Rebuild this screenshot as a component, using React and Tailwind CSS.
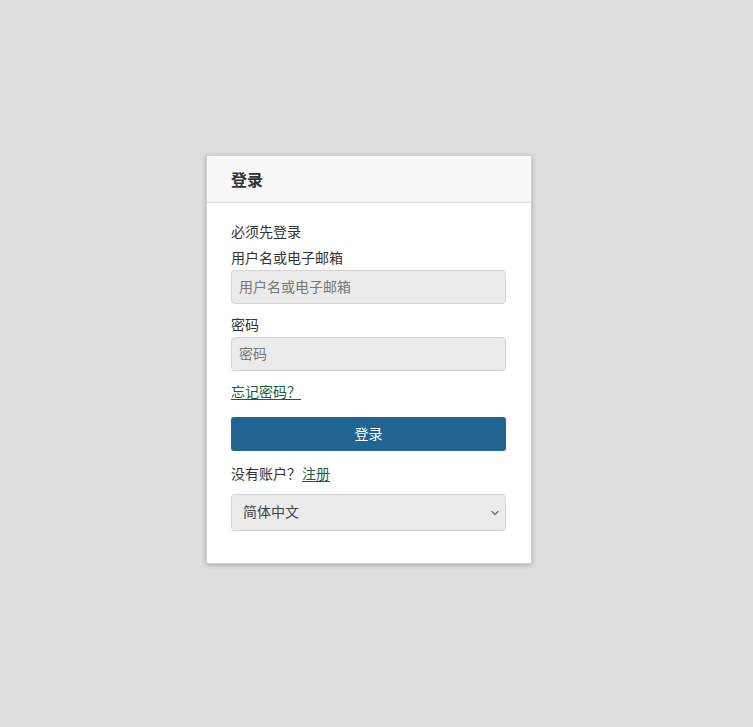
import React from 'react';

const App = () => {
  return (
    <div
      className="min-h-screen w-full bg-[#dedede] flex justify-center pr-[15px] pt-[155px] text-[14px] text-[#333]"
      style={{ fontFamily: '"Liberation Sans", "Noto Sans CJK SC", sans-serif' }}
    >
      <div className="w-[326px] h-[409px] bg-white border border-[#cfcfcf] rounded-[2px] shadow-[0_1px_5px_rgba(0,0,0,0.25)] flex flex-col">
        {/* Header */}
        <div className="h-[47px] bg-[#f7f7f7] border-b border-[#dcdcdc] px-[24px] pt-[4px] flex items-center">
          <h1 className="text-[16px] font-bold text-[#333]">登录</h1>
        </div>

        {/* Body */}
        <div className="pl-[24px] pr-[25px] pt-[19px] flex flex-col">
          <p className="leading-[20px]">必须先登录</p>
          <label className="leading-[20px] mt-[6px]">用户名或电子邮箱</label>
          <input
            className="mt-[2px] h-[34px] w-full rounded-[4px] border border-[#d4d4d4] bg-[#ebebeb] px-[7px] text-[14px] placeholder-[#777] outline-none"
            placeholder="用户名或电子邮箱"
          />
          <label className="leading-[20px] mt-[11px]">密码</label>
          <input
            type="password"
            className="mt-[2px] h-[34px] w-full rounded-[4px] border border-[#d4d4d4] bg-[#ebebeb] px-[7px] text-[14px] placeholder-[#777] outline-none"
            placeholder="密码"
          />
          <a href="#" className="mt-[11px] leading-[20px] self-start text-[#1b5e3b] underline underline-offset-[2px]">
            忘记密码？
          </a>
          <button className="mt-[15px] h-[34px] w-full rounded-[3px] bg-[#226593] text-white text-[14px]">
            登录
          </button>
          <p className="mt-[13px] leading-[20px] flex">
            <span>没有账户？</span>
            <a href="#" className="ml-[1px] text-[#1b5e3b] underline underline-offset-[2px]">注册</a>
          </p>
          <div className="relative mt-[10px]">
            <select className="appearance-none h-[37px] w-full rounded-[4px] border border-[#d4d4d4] bg-[#ebebeb] pl-[11px] text-[14px] text-[#444] outline-none">
              <option>简体中文</option>
            </select>
            <svg
              className="absolute right-[6px] top-[15px] pointer-events-none"
              width="10"
              height="8"
              viewBox="0 0 10 8"
              fill="none"
              stroke="#777"
              strokeWidth="1.4"
            >
              <path d="M1.5 2 L5 5.5 L8.5 2" />
            </svg>
          </div>
        </div>
      </div>
    </div>
  );
};

export default App;
